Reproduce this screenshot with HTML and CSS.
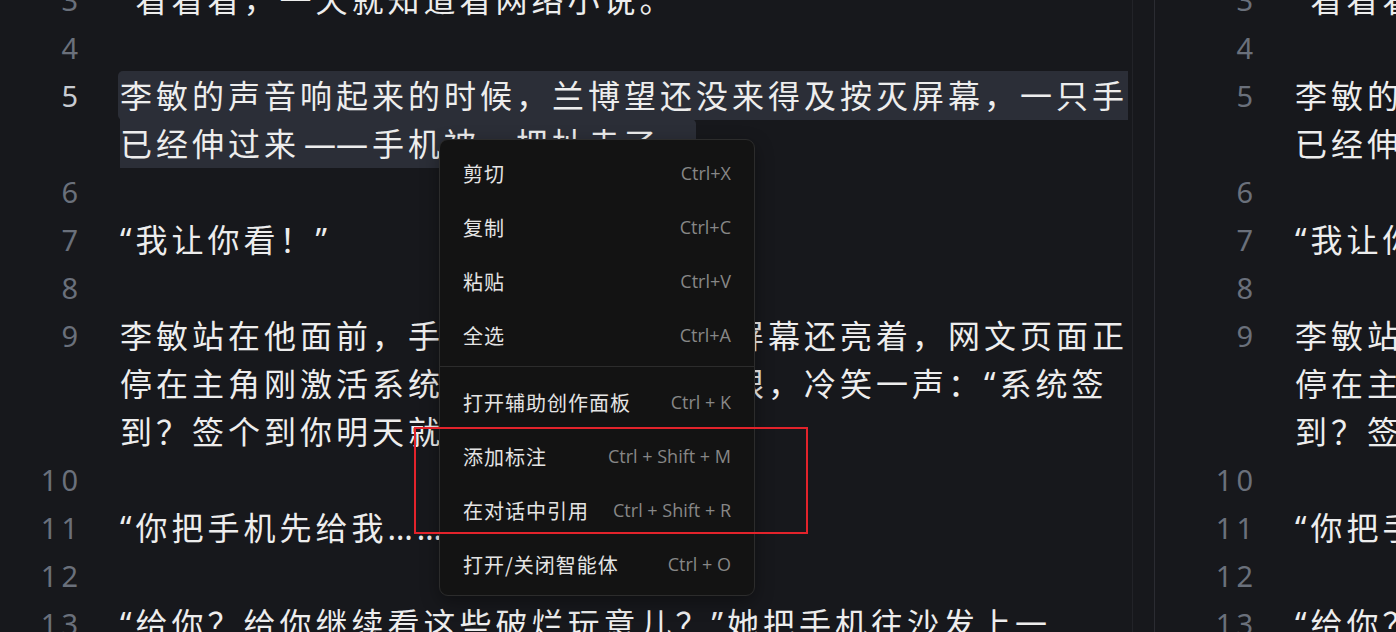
FILE: index.html
```html
<!DOCTYPE html>
<html lang="zh-CN">
<head>
    <meta charset="UTF-8">
    <meta name="viewport" content="width=device-width, initial-scale=1.0">
    <title>正文编辑</title>
    <link rel="stylesheet" href="styles.css">
</head>
<body>
    <div class="editor">
        <!-- Main pane -->
        <div class="pane pane-main">
            <div class="lines">
                <div class="line"><span class="num">3</span><div class="text">“看看看，一天就知道看网络小说。</div></div>
                <div class="line"><span class="num">4</span><div class="text"></div></div>
                <div class="line current"><span class="num">5</span><div class="text"><span class="selected">李敏的声音响起来的时候，兰博望还没来得及按灭屏幕，一只手已经伸过来<span class="dash">——</span>手机被一把扯走了。</span></div></div>
                <div class="line"><span class="num">6</span><div class="text"></div></div>
                <div class="line"><span class="num">7</span><div class="text">“我让你看！”</div></div>
                <div class="line"><span class="num">8</span><div class="text"></div></div>
                <div class="line"><span class="num">9</span><div class="text">李敏站在他面前，手里举着他的手机，屏幕还亮着，网文页面正停在主角刚激活系统那一章。她扫了一眼，冷笑一声：“系统签到？签个到你明天就能考上大学？”</div></div>
                <div class="line"><span class="num">10</span><div class="text"></div></div>
                <div class="line"><span class="num">11</span><div class="text">“你把手机先给我……”他小声说。</div></div>
                <div class="line"><span class="num">12</span><div class="text"></div></div>
                <div class="line"><span class="num">13</span><div class="text">“给你？给你继续看这些破烂玩意儿？”她把手机往沙发上一扔……</div></div>
            </div>
        </div>

        <div class="split"></div>

        <!-- Second pane, same document -->
        <div class="pane pane-side">
            <div class="lines">
                <div class="line"><span class="num">3</span><div class="text">“看看看，一天就知道看网络小说。</div></div>
                <div class="line"><span class="num">4</span><div class="text"></div></div>
                <div class="line"><span class="num">5</span><div class="text">李敏的声音响起来的时候，兰博望还没来得及按灭屏幕，一只手已经伸过来<span class="dash">——</span>手机被一把扯走了。</div></div>
                <div class="line"><span class="num">6</span><div class="text"></div></div>
                <div class="line"><span class="num">7</span><div class="text">“我让你看！”</div></div>
                <div class="line"><span class="num">8</span><div class="text"></div></div>
                <div class="line"><span class="num">9</span><div class="text">李敏站在他面前，手里举着他的手机，屏幕还亮着，网文页面正停在主角刚激活系统那一章。她扫了一眼，冷笑一声：“系统签到？签个到你明天就能考上大学？”</div></div>
                <div class="line"><span class="num">10</span><div class="text"></div></div>
                <div class="line"><span class="num">11</span><div class="text">“你把手机先给我……”他小声说。</div></div>
                <div class="line"><span class="num">12</span><div class="text"></div></div>
                <div class="line"><span class="num">13</span><div class="text">“给你？给你继续看这些破烂玩意儿？”她把手机往沙发上一扔……</div></div>
            </div>
        </div>
    </div>

    <!-- Right-click menu -->
    <div class="context-menu">
        <div class="menu-item"><span class="label">剪切</span><span class="keys">Ctrl+X</span></div>
        <div class="menu-item"><span class="label">复制</span><span class="keys">Ctrl+C</span></div>
        <div class="menu-item"><span class="label">粘贴</span><span class="keys">Ctrl+V</span></div>
        <div class="menu-item"><span class="label">全选</span><span class="keys">Ctrl+A</span></div>
        <div class="menu-sep"></div>
        <div class="menu-item"><span class="label">打开辅助创作面板</span><span class="keys">Ctrl + K</span></div>
        <div class="menu-item"><span class="label">添加标注</span><span class="keys">Ctrl + Shift + M</span></div>
        <div class="menu-item"><span class="label">在对话中引用</span><span class="keys">Ctrl + Shift + R</span></div>
        <div class="menu-item"><span class="label">打开/关闭智能体</span><span class="keys">Ctrl + O</span></div>
    </div>

    <div class="callout"></div>
</body>
</html>
```

FILE: styles.css
```css
/* General styles */
body {
    margin: 0;
    padding: 0;
    background-color: #17181c;
    overflow: hidden;
    font-family: "Noto Sans", "Noto Sans CJK SC", sans-serif;
}

.editor {
    display: flex;
    width: 100vw;
    height: 100vh;
    overflow: hidden;
}

/* Panes */
.pane {
    flex: none;
    overflow: hidden;
}

.pane-main {
    width: 1132px;
    border-right: 1px solid #222328;
}

.split {
    flex: none;
    width: 21px;
    border-right: 1px solid #2b2c32;
}

.pane-side {
    width: 1160px;
}

.lines {
    margin-top: -24px;
}

.line {
    display: flex;
    line-height: 48px;
}

/* Gutter numbers, trailing letter-spacing leaves the glyph 4px short of the box edge */
.num {
    flex: none;
    width: 82px;
    text-align: right;
    font-size: 29px;
    letter-spacing: 4px;
    color: #6a707b;
}

.pane-side .num {
    width: 102px;
}

.line.current .num {
    color: #c8cbd1;
}

.text {
    flex: none;
    width: 1008px;
    min-height: 48px;
    margin-left: 38px;
    font-size: 32px;
    letter-spacing: 4px;
    color: #ededed;
}

/* Two em dashes drawn as one unbroken rule */
.dash {
    display: inline-block;
    width: 72px;
    text-align: center;
    letter-spacing: 0;
}

.selected {
    background-color: #2b2e37;
    border-radius: 5px;
    padding: 3px 0 3px 2px;
    margin-left: -2px;
}

/* Context menu */
.context-menu {
    position: absolute;
    left: 439px;
    top: 139px;
    width: 316px;
    box-sizing: border-box;
    background-color: #131313;
    border: 1px solid #2c2c2c;
    border-radius: 9px;
    padding: 6px 0 4px;
    box-shadow: 0 6px 18px rgba(0, 0, 0, 0.35);
}

.menu-item {
    display: flex;
    justify-content: space-between;
    align-items: center;
    height: 54px;
    padding: 0 23px;
}

.menu-item .label {
    font-family: "Noto Sans CJK SC", sans-serif;
    font-size: 20px;
    letter-spacing: 1px;
    color: #e4e4e4;
}

.menu-item .keys {
    font-family: "Open Sans", sans-serif;
    font-size: 18px;
    color: #878787;
}

.menu-sep {
    height: 1px;
    background-color: #2c2c2c;
    margin: 4px 0 8px;
}

/* Red outline drawn over the menu */
.callout {
    position: absolute;
    left: 414px;
    top: 427px;
    width: 394px;
    height: 107px;
    box-sizing: border-box;
    border: 2px solid #e3232b;
}
```
